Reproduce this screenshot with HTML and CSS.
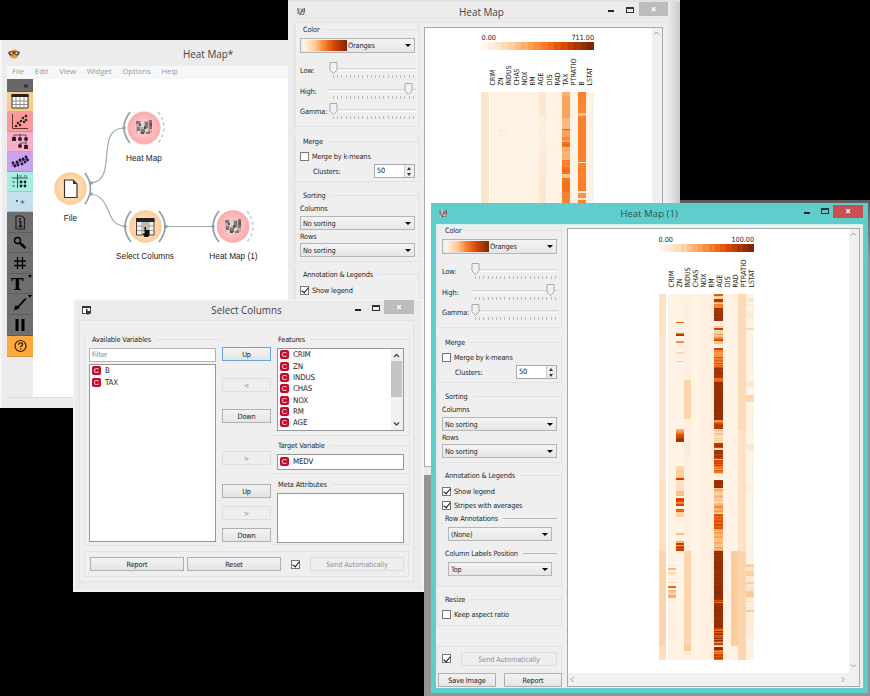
FILE: index.html
```html
<!DOCTYPE html>
<html lang="en">
<head>
<meta charset="utf-8">
<title>Heat Map</title>
<link rel="stylesheet" href="styles.css">
</head>
<body>
<svg width="0" height="0" class="defs">
  <defs>
    <radialGradient id="gOrange"><stop offset="0" stop-color="#ffecd2"/><stop offset=".6" stop-color="#ffdcb0"/><stop offset="1" stop-color="#fbcb94"/></radialGradient>
    <radialGradient id="gRed"><stop offset="0" stop-color="#ffc9c9"/><stop offset=".6" stop-color="#ffbcbc"/><stop offset="1" stop-color="#fba9ab"/></radialGradient>
    <symbol id="heat" viewBox="0 0 16 16">
      <path fill="#a79f9d" d="M0 1h16v12H0z" opacity=".6"/>
      <path fill="#7d7775" d="M0 1h4v3H0zM1 7h3v4H1zM5 9h4v4H5zM9 2h3v6H9zM13 0h3v9h-3zM10 11h4v3h-4z"/>
      <path fill="#ddd6d5" d="M5 1h3v3H5zM4 4h4v3H4zM9 9h3v3H9zM1 11h3v3H1z"/>
      <path fill="#575251" d="M3 4h2v2H3zM8 6h2v3H8zM14 3h2v3h-2zM5 12h3v2H5z"/>
    </symbol>
  </defs>
</svg>
<div class="desktop">
  <div class="shade"></div>

  <section class="win main">
    <header class="bar">
      <svg class="appicon" width="12" height="10" viewBox="0 0 12 10"><circle cx="6" cy="5" r="4.6" fill="#f3952f"/><path d="M.5 2.500h11v2.500q-1.500 2-3.500 1.500L6 4.500 4 6.500Q1.500 7 .5 5z" fill="#4a3c2e"/><circle cx="3.500" cy="4.300" r="1.200" fill="#c9c3b8"/><circle cx="8.500" cy="4.300" r="1.200" fill="#c9c3b8"/></svg>
      <h1>Heat Map*</h1>
    </header>
    <nav class="menu"><span>File</span><span>Edit</span><span>View</span><span>Widget</span><span>Options</span><span>Help</span></nav>
    <div class="work">
      <aside class="tools">
        <div class="t top"><svg width="26" height="13" viewBox="0 0 26 13"><path d="M17 5.500h4v3h-4z" fill="#333"/></svg></div>
        <div class="t c1"><svg width="26" height="20" viewBox="0 0 26 20"><path d="M5 3h16v13H5z" fill="#fff" stroke="#333"/><path d="M4.500 2h17v3h-17z" fill="#222"/><path d="M5 9h16M5 12.500h16M9 5v11M13 5v11M17 5v11" stroke="#777" stroke-width=".8"/></svg></div>
        <div class="t c2"><svg width="26" height="20" viewBox="0 0 26 20"><path d="M5.500 2v14.500H21" fill="none" stroke="#633" stroke-width="1"/><g fill="#322"><circle cx="9" cy="14" r="1.300"/><circle cx="11" cy="11" r="1.300"/><circle cx="13" cy="13" r="1.300"/><circle cx="14" cy="9" r="1.300"/><circle cx="16" cy="6" r="1.300"/><circle cx="17" cy="10" r="1.300"/><circle cx="19" cy="4" r="1.300"/><circle cx="19" cy="8" r="1.300"/></g></svg></div>
        <div class="t c3"><svg width="26" height="20" viewBox="0 0 26 20"><path d="M7 6V3h12v4M13 2v4M19 8v3h-6v3M19 11v5" fill="none" stroke="#533" stroke-width=".8"/><g fill="#322"><path d="M5 5h4v4H5zM17 13h4v4h-4z"/><circle cx="13" cy="7" r="2"/><circle cx="19" cy="7" r="2"/><circle cx="13" cy="14" r="2"/></g></svg></div>
        <div class="t c4"><svg width="26" height="20" viewBox="0 0 26 20"><path d="M5 14L21 6" stroke="#435" stroke-width="1"/><g fill="#213"><circle cx="6" cy="11" r="1.400"/><circle cx="8" cy="14" r="1.400"/><circle cx="10" cy="10" r="1.400"/><circle cx="11" cy="13" r="1.400"/><circle cx="13" cy="8" r="1.400"/><circle cx="15" cy="12" r="1.400"/><circle cx="16" cy="7" r="1.400"/><circle cx="18" cy="10" r="1.400"/><circle cx="19" cy="5" r="1.400"/><circle cx="20.500" cy="8" r="1.400"/></g></svg></div>
        <div class="t c5"><svg width="26" height="20" viewBox="0 0 26 20"><path d="M5 6h16M10.500 2v14" stroke="#255" stroke-width="1.100"/><path d="M5 10h3M5 14h3M12 4h3M17 4h3" stroke="#466"/><g fill="#022"><circle cx="14" cy="10" r="1.400"/><circle cx="18" cy="10" r="1.400"/><circle cx="14" cy="14" r="1.400"/><circle cx="18" cy="14" r="1.400"/></g></svg></div>
        <div class="t c6"><svg width="26" height="20" viewBox="0 0 26 20"><circle cx="10" cy="9" r="1" fill="#246"/><circle cx="15.500" cy="10" r="2.200" fill="#a9bcc8"/><circle cx="15.500" cy="10" r=".9" fill="#357"/></svg></div>
        <div class="t g"><svg width="26" height="20" viewBox="0 0 26 20"><path d="M9 4h6l2.500 2.500V17H9z" fill="none" stroke="#222" stroke-width="1.200"/><path d="M12 9.500h1.500v5M11.500 14.500h4" fill="none" stroke="#111" stroke-width="1.400"/><circle cx="13" cy="7" r="1" fill="#111"/></svg></div>
        <div class="t g"><svg width="26" height="20" viewBox="0 0 26 20"><circle cx="10.500" cy="7.500" r="3" fill="none" stroke="#000" stroke-width="1.400"/><path d="M13 10l5.500 5" stroke="#000" stroke-width="2.400"/></svg></div>
        <div class="t g"><svg width="26" height="20" viewBox="0 0 26 20"><path d="M10.500 4v12M15.500 4v12M7 8h12M7 12.500h12" stroke="#000" stroke-width="1.300"/></svg></div>
        <div class="t g tt"><b>T</b><svg width="4" height="3" viewBox="0 0 4 3"><path d="M0 0h4L2 3z"/></svg></div>
        <div class="t g"><svg width="26" height="20" viewBox="0 0 26 20"><path d="M7 16.500l1.200-5 3 .2 6-7 2-.7-.5 2-6.500 7-.2 1.500z" fill="#000"/><path d="M21 1h4l-2 3z"/></svg></div>
        <div class="t g"><svg width="26" height="20" viewBox="0 0 26 20"><path d="M8.500 4h3v12h-3zM14.500 4h3v12h-3z"/></svg></div>
        <div class="t help"><svg width="26" height="20" viewBox="0 0 26 20"><circle cx="13.500" cy="10" r="5.500" fill="none" stroke="#311d00" stroke-width="1.200"/><path d="M11.600 8.800q0-2 2-2t2 1.700q0 .9-1.200 1.500-.8.500-.8 1.300M13.600 12.300v1.300" fill="none" stroke="#311d00" stroke-width="1.200"/></svg></div>
      </aside>
      <div class="canvas">
        <svg width="260" height="320" viewBox="33 79 260 320">
          <g fill="none" stroke="#9eaab0" stroke-width="1.200">
            <path d="M90 183C119 183 94 128 124 128M90 194C113 196 104 226 125 226M165 226.500h49"/>
          </g>
          <g fill="none" stroke="#93a2aa" stroke-width="1.700">
            <path d="M85 173q11 15.500 0 31M130 112q-12 16 0 31M131 211q-12 15.500 0 31M159 211q12 15.500 0 31M219 211q-12 15.500 0 31"/>
          </g>
          <g fill="none" stroke="#b9c1c6" stroke-width="1.300" stroke-dasharray="3 3"><path d="M158 112q12 16 0 31M247 211q12 15.500 0 31"/></g>
          <g fill="#93a2aa"><circle cx="91" cy="183" r="1.800"/><circle cx="91" cy="194" r="1.800"/><circle cx="124" cy="128" r="1.800"/><circle cx="125" cy="226.500" r="1.800"/><circle cx="166" cy="226.500" r="1.800"/><circle cx="213" cy="226.500" r="1.800"/></g>
          <circle cx="70.500" cy="188.500" r="16.300" fill="url(#gOrange)"/>
          <circle cx="145.500" cy="226.500" r="16.300" fill="url(#gOrange)"/>
          <circle cx="144" cy="128" r="16.300" fill="url(#gRed)" stroke="#e6cfc0" stroke-width=".8"/>
          <circle cx="233" cy="226.500" r="16.300" fill="url(#gRed)"/>
          <path d="M64.500 180h8.500l4 4v13.500H64.500z" fill="#fff" stroke="#3a342c" stroke-width="1.200"/><path d="M73 180v4h4z" fill="#3a342c"/>
          <path d="M136.500 219h17.500v16h-17.500z" fill="#f6f3ee" stroke="#444"/><path d="M136 218h18.500v4H136z" fill="#222"/>
          <path d="M137 226h17M137 230.500h17M142 222v13M149 222v13" stroke="#8e8982" stroke-width=".8"/><path d="M142.500 222h6v10h-6z" fill="#bdb9b2"/>
          <path d="M144.500 227h1.500v3h3.500v5l-1.500 2h-3.500l-2-4 2 .5z" fill="#111"/>
          <use href="#heat" x="136" y="120" width="16" height="16"/>
          <use href="#heat" x="225" y="219" width="16" height="16"/>
        </svg>
        <span class="nl n1">Heat Map</span><span class="nl n2">File</span><span class="nl n3">Select Columns</span><span class="nl n4">Heat Map (1)</span>
      </div>
    </div>
  </section>

  <section class="win hm back">
    <header class="bar">
      <svg class="appicon" width="8" height="8"><use href="#heat" width="8" height="8"/></svg>
      <h1>Heat Map</h1>
      <div class="ctl"><i class="min"></i><i class="max"></i><b class="x">×</b></div>
    </header>
    <div class="client">
      <aside class="panel">
        <div class="group g1">
          <div class="cap">Color</div>
          <div class="combo"><i class="sw"></i>Oranges</div>
          <div class="sliders">
            <div class="sl"><label>Low:</label><div class="track"><svg width="9" height="12" viewBox="0 0 9 12"><path d="M1 .5h7V8L4.500 11.500 1 8z"/></svg></div></div>
            <div class="sl hi"><label>High:</label><div class="track"><svg width="9" height="12" viewBox="0 0 9 12"><path d="M1 .5h7V8L4.500 11.500 1 8z"/></svg></div></div>
            <div class="sl"><label>Gamma:</label><div class="track"><svg width="9" height="12" viewBox="0 0 9 12"><path d="M1 .5h7V8L4.500 11.500 1 8z"/></svg></div></div>
          </div>
        </div>
        <div class="group g2">
          <div class="cap">Merge</div>
          <div class="chk"><i class="box"></i>Merge by k-means</div>
          <div class="clus"><span>Clusters:</span><div class="spin">50<em></em></div></div>
        </div>
        <div class="group g3">
          <div class="cap">Sorting</div>
          <div class="lab">Columns</div><div class="combo">No sorting</div>
          <div class="lab">Rows</div><div class="combo">No sorting</div>
        </div>
        <div class="group g4">
          <div class="cap">Annotation &amp; Legends</div>
          <div class="chk"><i class="box on"></i>Show legend</div>
          <div class="chk"><i class="box on"></i>Stripes with averages</div>
        </div>
      </aside>
      <div class="view"><svg id="map-back" width="226" height="440" viewBox="425 28 226 440"></svg><div class="vs"><svg width="9" height="8" viewBox="0 0 9 8"><path d="M2 5.500l2.500-2.500L7 5.500" fill="none" stroke="#999"/></svg></div></div>
    </div>
  </section>

  <section class="win sel">
    <header class="bar">
      <svg class="appicon" width="9" height="9" viewBox="0 0 9 9"><path d="M.5.500h8v7h-8z" fill="#fff" stroke="#444"/><path d="M0 0h9v2H0z" fill="#333"/><path d="M4 3h1.500v2H8v2L6 9 3.500 7H4z" fill="#333"/></svg>
      <h1>Select Columns</h1>
      <div class="ctl"><i class="min"></i><i class="max"></i><b class="x">×</b></div>
    </header>
    <div class="client">
      <div class="cols">
        <div class="group avail">
          <div class="cap">Available Variables</div>
          <div class="filter">Filter</div>
          <ul class="list"><li>B</li><li>TAX</li></ul>
        </div>
        <div class="btns">
          <button class="focus">Up</button><button class="dis b2">&lt;</button><button class="b3">Down</button><button class="dis b4">&gt;</button><button class="b5">Up</button><button class="dis b6">&gt;</button><button class="b7">Down</button>
        </div>
        <div class="right">
          <div class="group feat"><div class="cap">Features</div>
            <div class="scroll"><ul class="list"><li>CRIM</li><li>ZN</li><li>INDUS</li><li>CHAS</li><li>NOX</li><li>RM</li><li>AGE</li></ul>
              <div class="sb"><svg width="11" height="12" viewBox="0 0 11 12"><path d="M3 8l2.500-2.500L8 8" fill="none" stroke="#444" stroke-width="1.300"/></svg><i></i><svg width="11" height="12" viewBox="0 0 11 12"><path d="M3 4.500L5.500 7 8 4.500" fill="none" stroke="#444" stroke-width="1.300"/></svg></div></div>
          </div>
          <div class="group targ"><div class="cap">Target Variable</div><ul class="list"><li>MEDV</li></ul></div>
          <div class="group meta"><div class="cap">Meta Attributes</div><ul class="list"></ul></div>
        </div>
      </div>
      <div class="foot"><button>Report</button><button>Reset</button><i class="box on"></i><button class="dis">Send Automatically</button></div>
    </div>
  </section>

  <section class="win hm front">
    <header class="bar">
      <svg class="appicon" width="8" height="8"><use href="#heat" width="8" height="8"/></svg>
      <h1>Heat Map (1)</h1>
      <div class="ctl"><i class="min"></i><i class="max"></i><b class="x">×</b></div>
    </header>
    <div class="client">
      <aside class="panel">
        <div class="group g1">
          <div class="cap">Color</div>
          <div class="combo"><i class="sw"></i>Oranges</div>
          <div class="sliders">
            <div class="sl"><label>Low:</label><div class="track"><svg width="9" height="12" viewBox="0 0 9 12"><path d="M1 .5h7V8L4.500 11.500 1 8z"/></svg></div></div>
            <div class="sl hi"><label>High:</label><div class="track"><svg width="9" height="12" viewBox="0 0 9 12"><path d="M1 .5h7V8L4.500 11.500 1 8z"/></svg></div></div>
            <div class="sl"><label>Gamma:</label><div class="track"><svg width="9" height="12" viewBox="0 0 9 12"><path d="M1 .5h7V8L4.500 11.500 1 8z"/></svg></div></div>
          </div>
        </div>
        <div class="group g2">
          <div class="cap">Merge</div>
          <div class="chk"><i class="box"></i>Merge by k-means</div>
          <div class="clus"><span>Clusters:</span><div class="spin">50<em></em></div></div>
        </div>
        <div class="group g3">
          <div class="cap">Sorting</div>
          <div class="lab">Columns</div><div class="combo">No sorting</div>
          <div class="lab">Rows</div><div class="combo">No sorting</div>
        </div>
        <div class="group g4">
          <div class="cap">Annotation &amp; Legends</div>
          <div class="chk"><i class="box on"></i>Show legend</div>
          <div class="chk"><i class="box on"></i>Stripes with averages</div>
          <div class="cap sub">Row Annotations</div><div class="combo in">(None)</div>
          <div class="cap sub s2">Column Labels Position</div><div class="combo in">Top</div>
        </div>
        <div class="group g5">
          <div class="cap">Resize</div>
          <div class="chk"><i class="box"></i>Keep aspect ratio</div>
        </div>
        <div class="auto"><i class="box on"></i><button class="dis">Send Automatically</button></div>
        <div class="pair"><button>Save Image</button><button>Report</button></div>
      </aside>
      <div class="view"><svg id="map-front" width="280" height="444" viewBox="568 229 280 444"></svg><div class="vs"><svg width="9" height="8" viewBox="0 0 9 8"><path d="M2 5.500l2.500-2.500L7 5.500" fill="none" stroke="#999"/></svg><svg width="9" height="8" viewBox="0 0 9 8"><path d="M2 2.500L4.500 5 7 2.500" fill="none" stroke="#999"/></svg></div>
        <div class="hs"><svg width="8" height="9" viewBox="0 0 8 9"><path d="M5.500 2L3 4.500 5.500 7" fill="none" stroke="#999"/></svg><svg width="8" height="9" viewBox="0 0 8 9"><path d="M2.500 2L5 4.500 2.500 7" fill="none" stroke="#999"/></svg></div></div>
    </div>
  </section>
</div>
<script src="heatmap.js"></script>
</body>
</html>
```
FILE: styles.css
```css
*{box-sizing:border-box;margin:0;padding:0}
body{width:870px;height:696px;overflow:hidden;background:#000;font-family:"DejaVu Sans Condensed","DejaVu Sans",sans-serif;font-stretch:condensed;font-size:7.3px;letter-spacing:-.14px;color:#262626}
i,em{font-style:normal}
.defs{position:absolute}
.desktop{position:relative;width:870px;height:696px;overflow:hidden}
.shade{position:absolute;left:424px;top:200px;width:446px;height:496px;background:linear-gradient(#5c5c5c,#949494 60px)}
.win{position:absolute;background:#ebebeb}
.bar{display:flex;align-items:center;position:relative}
.bar h1{flex:1;text-align:center;font:400 9.9px "Open Sans",sans-serif;color:#444;letter-spacing:0}
.ctl{display:flex;align-items:flex-start;align-self:flex-start}
.ctl .min{width:6px;height:2px;background:#222}
.ctl .max{width:8px;height:6px;border:1px solid #333;border-top-width:2px}
.ctl .x{background:#bcbcbc;color:#fff;font:700 10px/14px "Open Sans",sans-serif;text-align:center}

/* main canvas window */
.main{left:0;top:40px;width:300px;height:368px;background:#ececec;padding:4px 0 0 5px;border-left:2px solid #f6f6f6}
.main .bar{height:22px}
.main .appicon{margin-left:1px;margin-top:-2px}
.main h1{padding-left:163px;text-align:left;margin-top:-2px}
.menu{display:flex;height:13px;align-items:center;background:#f6f7f8;color:#9a9a9a;font:7.7px "Open Sans",sans-serif;padding:0 0 3px 5px;gap:10.7px;letter-spacing:0}
.work{display:flex;height:319px;border-bottom:1px solid #ddd}
.tools{width:26px;background:#ececec}
.t{height:20px;border-bottom:1px solid rgba(0,0,0,.12);overflow:hidden}
.t svg{display:block}
.top{height:13px;background:#686868}
.c1{background:#fbca8d}.c2{background:#fb9a9a}.c3{background:#f6aeca}.c4{background:#cca3f0}.c5{background:#a9eee0}.c6{background:#c6dfec}
.g{height:20.6px;background:#6e6e6e;border-bottom-color:#5c5c5c}
.tt{display:flex;justify-content:flex-end;color:#000}
.tt b{font:700 17px/20px "DejaVu Serif",serif;width:14px;letter-spacing:0}
.tt svg{margin:1px 1px 0 3px}
.help{height:21px;background:#fda93c}
.canvas{position:relative;flex:1;background:#fff}
.canvas svg{display:block}
.nl{position:absolute;width:80px;text-align:center;font:8.2px/10px "Liberation Sans",sans-serif;letter-spacing:.04px;color:#222}
.n1{left:71px;top:75px}.n2{left:-2.5px;top:135px}.n3{left:72px;top:173px}.n4{left:160.500px;top:173px}

/* controls */
.group{border:1px solid #e2e2e2;border-top:0}
.cap{display:flex;flex:none;align-items:center;height:10px;gap:5px;padding-left:7px;white-space:nowrap}
.cap::after{content:"";flex:1;height:1px;background:#e2e2e2}
.combo{height:14px;margin:0 4px;border:1px solid #b5b5b5;background:linear-gradient(#f4f4f4,#e6e6e6);display:flex;align-items:center;padding-left:2px;position:relative}
.combo::after{content:"";margin-left:auto;margin-right:3px;border:3px solid transparent;border-top:3.500px solid #000;border-bottom:0}
.sw{width:44px;height:11px;margin-right:1px;background:linear-gradient(90deg,#fff5eb,#fdd0a2 25%,#fd8d3c 45%,#d94801 70%,#7f2704)}
.box{display:block;width:9px;height:9px;border:1px solid #777;background:#fff;flex:none;position:relative}
.box.on::after{content:"";position:absolute;left:2px;top:-.5px;width:3px;height:6px;border:solid #111;border-width:0 1.500px 1.500px 0;transform:rotate(40deg)}
button{display:block;height:14px;border:1px solid #b0b0b0;background:linear-gradient(#f3f3f3,#e4e4e4);font:inherit;letter-spacing:inherit;color:#222;text-align:center;line-height:11px}
button.dis{border-color:#dedede;background:#efefef;color:#929292}
button.focus{border-color:#6ba3dc}

/* heat map windows */
.panel{width:125px;flex:none}
.g1{height:103px}.g1 .combo{margin-top:4px;height:15px}
.sliders{padding-top:7.5px}
.sl{height:20.5px;display:flex;align-items:center;padding:0 3px 0 4px}
.sl label{width:29px}
.track{flex:1;height:17px;background:linear-gradient(#d6d6d6,#d6d6d6) 0 6px/100% 1px no-repeat,linear-gradient(#fafafa,#fafafa) 0 8px/100% 1px no-repeat,repeating-linear-gradient(90deg,#bdbdbd 0 1px,transparent 1px 4.200px) 4px 13px/81px 3px no-repeat}
.track svg{display:block;fill:#f1f1f1;stroke:#aaa}
.hi .track{padding-left:75px}
.g2{margin-top:9px;height:46px}
.chk{height:14px;display:flex;align-items:center;gap:3px;padding-left:4px}
.g2 .chk{margin-top:3px}
.clus{display:flex;height:14px;margin-top:1px;padding:0 4px 0 17px;justify-content:space-between;align-items:center}
.spin{width:41px;height:14px;border:1px solid #aaa;background:#fff;padding-left:2px;line-height:12px;display:flex}
.spin em{margin-left:auto;width:10px;background:#eee;border-left:1px solid #ccc;position:relative}
.spin em::before,.spin em::after{content:"";position:absolute;left:2px;border:2.500px solid transparent}
.spin em::before{top:1.5px;border-top:0;border-bottom:3px solid #333}
.spin em::after{bottom:1.5px;border-bottom:0;border-top:3px solid #333}
.g3{margin-top:8px;height:72px}
.lab{height:10px;line-height:10px;margin:2px 0 2px;padding-left:4px}
.g3 .cap{margin-bottom:4px}
.g3 .combo+.lab{margin-bottom:1px}
.g4{margin-top:7px;height:117px}
.g4 .cap+.chk{margin-top:4px}
.sub{margin-top:1px;padding-right:4px}.sub::after{background:#bbb}
.s2{margin-top:7px}
.combo.in{margin:4px 9px 0 10px}
.g5{margin-top:7px;height:32px}.g5 .chk{margin-top:3px}
.auto{margin-top:20px;height:24px;border:1px solid #e2e2e2;border-bottom:0;display:flex;padding:5px 4px 0;gap:10px}
.auto .box{margin-top:2px}.auto button{flex:1}
.pair{display:flex;gap:8px;padding-left:1px;margin-top:3px}.pair button{width:58px}
.hm .client{display:flex;background:#efefef}
.view{display:grid;grid-template-columns:1fr 10px;background:#fff;border:1px solid #a9a9a9}
.view>svg{display:block}
.view rect{shape-rendering:crispEdges}
.vs{background:#f0f0f0;display:flex;flex-direction:column;justify-content:space-between;padding:1px 0 3px}
.hs{grid-column:1/3;background:#f0f0f0;display:flex;justify-content:space-between;align-items:center;padding-right:12px}

.back{left:288px;top:0;width:392px;height:475px;border-top:2px solid #e1e1e1;padding-left:6px;background:linear-gradient(90deg,#ebebeb 97%,#c9c9c9)}
.back .bar{height:20px;padding-left:3px}
.back h1{padding-left:31px;margin-right:-19px}
.back .ctl{margin-right:12px;gap:12px}
.back .min,.front .min{margin-top:8px}.back .max,.front .max{margin-top:5px}
.back .x{width:29px;height:14px;margin-left:-7px}
.back .client{width:374px;height:445px;border:1px solid #e4e4e4;padding:0;gap:4px}
.back .view{width:239px;margin-top:4px;height:440px}
.back .panel{padding-top:1px}

.front{left:431px;top:203px;width:437px;height:490px;background:#5ecdcb;padding-left:5px}
.front .bar{height:21px;padding-left:3px}
.front h1{color:#2c5658;padding-left:33px;margin-right:-14px;font-size:9.700px}
.front .ctl{margin-right:5px;gap:11px}
.front .ctl .x{background:#c8504f;width:30px;height:13px;line-height:12px;margin-left:-7px;margin-top:2px}
.front .ctl .min{margin-top:9px}
.front .client{width:427px;height:464px;padding:0 0 0 1px;gap:5px;border-top:1px solid #c9f3ef}
.front .view{width:293px;height:459px;margin-top:3px;grid-template-rows:444px 1fr}

/* column selection window */
.sel{left:73px;top:299px;width:351px;height:293px;border:2px solid #f3f3f3;padding-left:4px}
.sel .bar{height:19px;padding-left:3px}
.sel h1{padding-left:37px;margin-right:-10px;margin-top:-2px}
.sel .ctl{margin-right:8px;gap:11px}
.sel .min{margin-top:8px}.sel .max{margin-top:4px}
.sel .x{width:30px;height:14px;margin-left:-7px;margin-top:-1px}
.sel .client{width:335px;height:262px;background:#efefef;border:1px solid #e3e3e3;padding:13px 0 0 4px}
.cols{display:flex;height:212px}
.avail{width:137px;padding:0 4px;height:212px;margin-right:1px;border-right:0}
.avail .cap{margin:0 -4px}
.right .cap{margin:0 -5px;padding-left:6px}
.filter{margin-top:4px;width:127px;height:14px;border:1px solid #b5b5b5;background:#fff;color:#888;padding-left:2px;line-height:12px}
.list{list-style:none;background:#fff;border:1px solid #969696;padding-top:1px;font-size:7.9px;letter-spacing:-.12px}
.list li{height:11.350px;display:flex;align-items:center;gap:4px;padding-left:2px}
.list li::before{content:"C";width:9px;height:9px;border-radius:2px;background:#c4092f;color:#fff;text-align:center;font:7.500px/9px "Liberation Sans",sans-serif;letter-spacing:0}
.avail .list{margin-top:2px;padding-top:0;width:127px;height:178px}
.btns{width:49px;padding-top:13px;display:flex;flex-direction:column}
.b2{margin-top:17px}.b3{margin-top:17px}.b4{margin-top:28px}.b5{margin-top:19px}.b6{margin-top:8px}.b7{margin-top:8px}
.right{width:139px}
.right .group{padding:0 5px 0 6px;border-left:0}
.feat{height:102px}
.scroll{margin-top:4px;height:83px;width:127px;border:1px solid #969696;display:flex;background:#fff}
.scroll .list{flex:1;border:0;padding-top:0}
.sb{width:12px;background:#f0f0f0;display:flex;flex-direction:column}
.sb i{height:36px;background:#c4c4c4;margin-right:1px}.sb svg:last-child{margin-top:auto}
.targ{margin-top:4px;height:34px}.targ .list{width:127px;height:16px;margin-top:4px}
.meta{margin-top:5px;height:66px}.meta .list{width:127px;height:50px;margin-top:4px}
.foot{display:flex;align-items:center;margin-top:5px;width:325px;height:26px;border:1px solid #e2e2e2;padding-left:5px}
.foot button{width:94px}.foot button+button{margin-left:3px}.foot .box{margin:0 10px}.foot .box+button{margin-left:0}
```
FILE: heatmap.js
```js
const NS = 'http://www.w3.org/2000/svg';
const ramp = ['#fff5eb', '#fee6ce', '#fdd0a2', '#fdae6b', '#fd8d3c', '#f16913', '#d94801', '#a63603', '#7f2704']
  .map(h => [1, 3, 5].map(i => parseInt(h.slice(i, i + 2), 16)));

function color(v) {
  const t = Math.max(0, Math.min(0.9999, v)) * 8, i = Math.floor(t), f = t - i;
  return 'rgb(' + ramp[i].map((c, k) => Math.round(c + (ramp[i + 1][k] - c) * f)).join(',') + ')';
}
function rect(svg, x, y, w, h, v) {
  const r = document.createElementNS(NS, 'rect');
  Object.entries({ x, y, width: w, height: h, fill: color(v) }).forEach(([k, a]) => r.setAttribute(k, a));
  svg.appendChild(r);
}
function text(svg, s, x, y, size, len, rot, anchor) {
  const t = document.createElementNS(NS, 'text');
  t.textContent = s;
  t.setAttribute('font-size', size);
  t.setAttribute('fill', '#222');
  t.setAttribute('letter-spacing', '0');
  if (len) { t.setAttribute('textLength', len); t.setAttribute('lengthAdjust', 'spacingAndGlyphs'); }
  if (anchor) t.setAttribute('text-anchor', anchor);
  t.setAttribute('transform', `translate(${x} ${y})` + (rot ? ' rotate(-90)' : ''));
  svg.appendChild(t);
}
function noise(y) {
  const s = Math.sin(y * 127.1) * 43758.5;
  return (s - Math.floor(s)) * 2 - 1;
}
// bands: [top, bottom, value, variation]; variation changes the shade row by row
function bands(svg, x, w, list) {
  for (const [a, b, v, n] of list) {
    if (!n) { rect(svg, x, a, w, b - a, v); continue; }
    for (let y = a; y < b; y++) rect(svg, x, y, w, Math.min(1, b - y), v + n * noise(y));
  }
}
function legend(svg, x, w, y, max) {
  for (let i = 0; i < 17; i++) rect(svg, x + w * i / 17, y, w / 17 + 0.3, 8, i / 16);
  text(svg, '0.00', x, y - 2, 7.1, 14.5);
  text(svg, max, x + w, y - 2, 7.1, 22.5, false, 'end');
}

const b = document.getElementById('map-back');
legend(b, 481.5, 112.5, 42, '711.00');
rect(b, 481, 92, 7.5, 380, 0.13);
rect(b, 490, 92, 104, 380, 0.02);
[['CRIM', 16], ['ZN', 8], ['INDUS', 20], ['CHAS', 17], ['NOX', 14], ['RM', 9], ['AGE', 13], ['DIS', 11], ['RAD', 13], ['TAX', 12], ['PTRATIO', 27], ['B', 4], ['LSTAT', 18]]
  .forEach(([s, l], i) => text(b, s, 495 + i * 8.08, 85.5, 7, l, true));
bands(b, 498, 9, [[118, 119, .06], [129, 132, .07], [134, 137, .07]]);
bands(b, 539, 7, [[92, 117, .12], [117, 150, .06, .02], [150, 172, .09], [172, 204, .12]]);
bands(b, 562, 8, [[92, 96, .37, .02], [96, 118, .42], [118, 129, .33], [129, 130, .65], [130, 137, .43], [137, 140, .52], [140, 142, .42], [142, 147, .6, .04], [147, 160, .37, .02], [160, 167, .54, .03], [167, 174, .59, .03], [174, 178, .28, .05], [178, 192, .59], [192, 220, .54]]);
bands(b, 578, 8, [[92, 102, .54], [102, 113, .52, .02], [113, 116, .3], [116, 162, .54], [162, 163, .1], [163, 191, .54, .02], [191, 193, .1], [193, 198, .47, .04], [198, 200, .1], [200, 220, .54]]);

const f = document.getElementById('map-front');
legend(f, 658.5, 95.5, 244, '100.00');
const cw = 7.82, col = i => 668 + i * cw;
[['CRIM', 17], ['ZN', 9], ['INDUS', 20], ['CHAS', 18], ['NOX', 14], ['RM', 9], ['AGE', 13], ['DIS', 11], ['RAD', 13], ['PTRATIO', 28], ['LSTAT', 18]]
  .forEach(([s, l], i) => text(f, s, 673.5 + i * 8, 287.5, 7.2, l, true));
rect(f, 668, 294, 86, 366, 0.02);
rect(f, col(2), 294, cw, 366, 0.05);
rect(f, col(4), 294, cw * 2, 366, 0.04);
bands(f, 658.5, 7.5, [[294, 335, .15, .01], [335, 479, .12], [479, 551, .16], [551, 646, .22], [646, 660, .17]]);
bands(f, col(0), cw, [[565, 566, .15], [568, 570, .35], [572, 575, .17], [582, 583, .22], [586, 588, .65], [590, 592, .32], [592, 595, .2, .1], [595, 598, .37], [601, 640, .05, .04]]);
bands(f, col(1), cw, [[299, 301, .08], [322, 323, .68], [332, 333, .2], [333, 334, .5], [334, 336, .85], [341, 343, .5], [352, 354, .22], [361, 362, .27],
  [429, 431, .38], [431, 433, .5], [433, 435, .65], [435, 438, .76], [438, 442, .88], [466, 470, .2], [470, 478, .25, .04], [478, 480, .78], [480, 491, .17], [491, 496, .32, .05], [498, 502, .8, .12], [502, 504, .55], [504, 506, .75], [509, 512, .66], [512, 517, .25, .05], [533, 535, .3], [541, 543, .4], [543, 545, .8], [545, 546, .5], [546, 551, .78, .1]]);
bands(f, col(2), cw, [[380, 419, .22], [442, 453, .09], [551, 646, .22], [646, 651, .27]]);
bands(f, 714.3, 8.2, [[294, 296, .68], [296, 299, .25, .1], [299, 302, .85], [302, 308, .5, .25], [308, 321, .9, .04], [321, 325, .04], [326, 328, .25], [328, 330, .8], [330, 337, .3, .15], [337, 341, .6, .2], [341, 344, .3], [344, 347, .03], [348, 350, .78], [350, 357, .48, .05], [357, 368, .65, .15], [368, 378, .87, .05], [378, 382, .62, .08],
  [382, 420, .93, .03], [420, 424, .55, .2], [424, 429, .8, .12], [429, 443, .22, .1], [443, 448, .82, .08], [448, 450, .2], [450, 459, .85, .06], [459, 460, .3], [460, 466, .75, .12], [466, 474, .5, .25], [474, 480, .04], [480, 488, .9, .05], [488, 506, .3, .12], [506, 514, .35, .2], [514, 519, .7, .12], [519, 529, .73, .12], [529, 551, .36, .13],
  [551, 600, .93, .04], [600, 603, .7, .15], [603, 628, .93, .03], [628, 642, .78, .18], [642, 646, .6, .3], [647, 650, .95], [650, 654, .55, .2], [654, 660, .72, .08]]);
rect(f, col(8), 551, cw, 95, 0.26);
bands(f, col(9), cw, [[294, 430, .19], [430, 551, .15], [551, 660, .22]]);
bands(f, col(10), cw, [[298, 302, .12], [304, 306, .1], [312, 318, .1], [328, 330, .18], [382, 386, .13], [395, 402, .22], [444, 450, .12], [487, 489, .09], [564, 567, .25], [567, 571, .15], [571, 576, .25], [576, 582, .12], [582, 584, .25], [584, 591, .14, .03], [591, 597, .27], [597, 610, .1, .06], [610, 612, .27], [612, 638, .08, .03]]);
```
